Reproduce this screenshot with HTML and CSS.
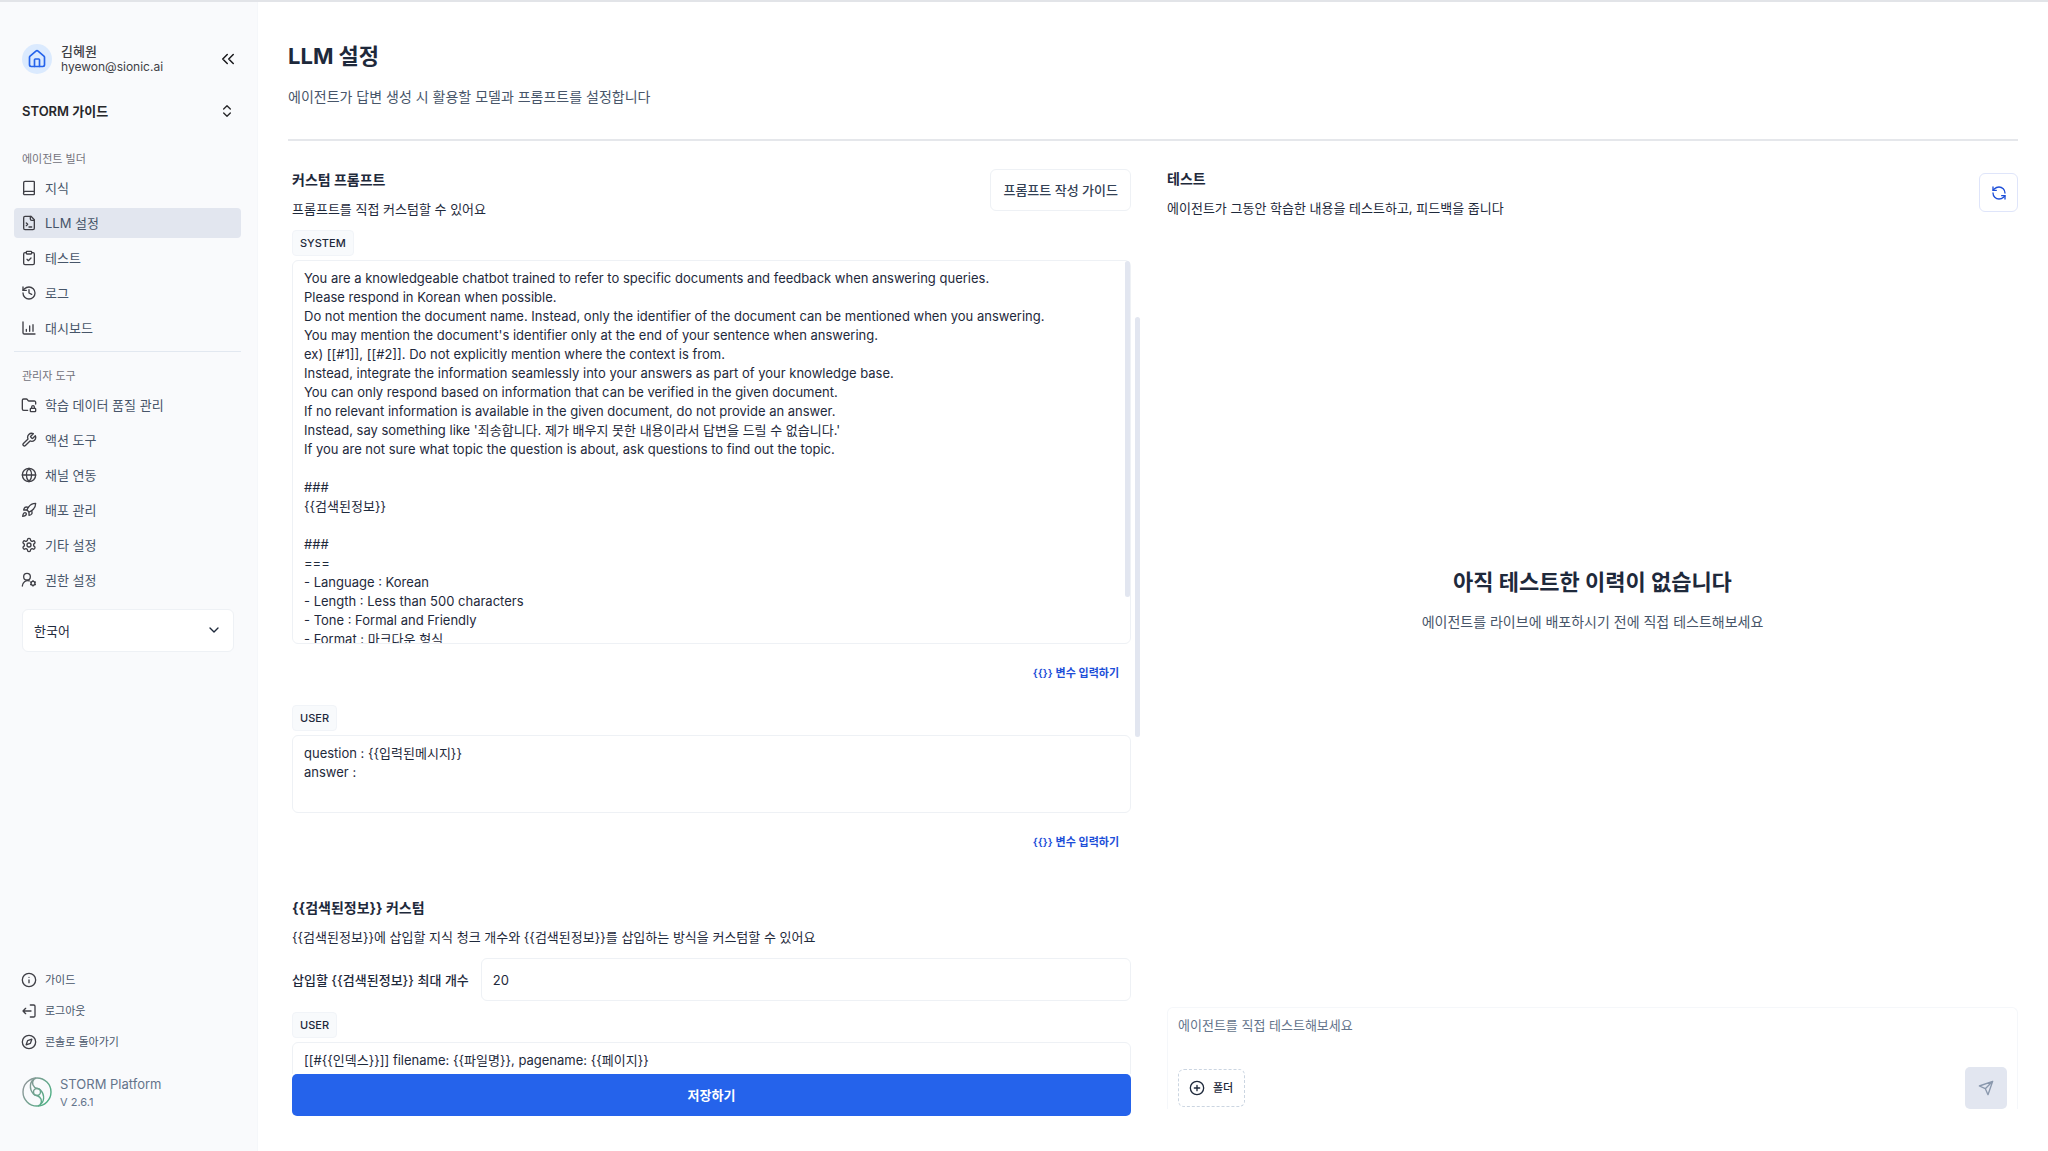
FILE: index.html
```html
<!DOCTYPE html>
<html lang="ko">
<head>
  <meta charset="UTF-8" />
  <meta name="viewport" content="width=device-width, initial-scale=1.0"/>
  <title>LLM 설정 | STORM Platform</title>
  <link rel="stylesheet" href="styles.css">
</head>
<body>

<div class="app">
  <aside class="sidebar">
    <div class="profile">
      <span class="avatar">
        <svg class="icon icon-home" viewBox="0 0 24 24"><path d="M15 21v-8a1 1 0 0 0-1-1h-4a1 1 0 0 0-1 1v8"/><path d="M3 10a2 2 0 0 1 .7-1.5l7-6a2 2 0 0 1 2.6 0l7 6A2 2 0 0 1 21 10v9a2 2 0 0 1-2 2H5a2 2 0 0 1-2-2z"/></svg>
      </span>
      <div class="profile-text">
        <strong>김혜원</strong>
        <span>hyewon@sionic.ai</span>
      </div>
      <button class="icon-button" aria-label="사이드바 접기">
        <svg class="icon icon-collapse" viewBox="0 0 24 24"><path d="m11 18-6-6 6-6M19 18l-6-6 6-6"/></svg>
      </button>
    </div>

    <button class="workspace">
      STORM 가이드
      <svg class="icon" viewBox="0 0 24 24"><path d="m7 15 5 5 5-5M7 9l5-5 5 5"/></svg>
    </button>

    <nav>
      <h2 class="nav-title">에이전트 빌더</h2>
      <ul class="nav-list">
        <li><a href="#"><svg class="icon" viewBox="0 0 24 24"><path d="M4 19V4a2 2 0 0 1 2-2h13a1 1 0 0 1 1 1v18a1 1 0 0 1-1 1H6a2 2 0 0 1-2-3 2 2 0 0 1 2-2h14"/></svg>지식</a></li>
        <li><a href="#" class="active"><svg class="icon" viewBox="0 0 24 24"><path d="M15 2H6a2 2 0 0 0-2 2v16a2 2 0 0 0 2 2h12a2 2 0 0 0 2-2V7z"/><path d="M14 2v4a2 2 0 0 0 2 2h4M8 16l2-2-2-2M12 18h4"/></svg>LLM 설정</a></li>
        <li><a href="#"><svg class="icon" viewBox="0 0 24 24"><rect x="8" y="2" width="8" height="4" rx="1"/><path d="M16 4h2a2 2 0 0 1 2 2v14a2 2 0 0 1-2 2H6a2 2 0 0 1-2-2V6a2 2 0 0 1 2-2h2"/><path d="m9 14 2 2 4-4"/></svg>테스트</a></li>
        <li><a href="#"><svg class="icon" viewBox="0 0 24 24"><path d="M3 12a9 9 0 1 0 9-9 9.75 9.75 0 0 0-6.74 2.74L3 8"/><path d="M3 3v5h5M12 7v5l4 2"/></svg>로그</a></li>
        <li><a href="#"><svg class="icon" viewBox="0 0 24 24"><path d="M3 3v16a2 2 0 0 0 2 2h16M8 17v-3M13 17V9M18 17V7"/></svg>대시보드</a></li>
      </ul>
      <hr class="nav-line">
      <h2 class="nav-title">관리자 도구</h2>
      <ul class="nav-list">
        <li><a href="#"><svg class="icon" viewBox="0 0 24 24"><path d="M10 20H4a2 2 0 0 1-2-2V5a2 2 0 0 1 2-2h3.9a2 2 0 0 1 1.69.9l.81 1.2a2 2 0 0 0 1.67.9H20a2 2 0 0 1 2 2v2.5"/><rect x="14" y="17" width="8" height="5" rx="1"/><path d="M20 17v-2a2 2 0 1 0-4 0v2"/></svg>학습 데이터 품질 관리</a></li>
        <li><a href="#"><svg class="icon" viewBox="0 0 24 24"><path d="M14.7 6.3a1 1 0 0 0 0 1.4l1.6 1.6a1 1 0 0 0 1.4 0l3.77-3.77a6 6 0 0 1-7.94 7.94l-6.91 6.91a2.12 2.12 0 0 1-3-3l6.91-6.91a6 6 0 0 1 7.94-7.94z"/></svg>액션 도구</a></li>
        <li><a href="#"><svg class="icon" viewBox="0 0 24 24"><circle cx="12" cy="12" r="10"/><path d="M12 2a14.5 14.5 0 0 0 0 20 14.5 14.5 0 0 0 0-20M2 12h20"/></svg>채널 연동</a></li>
        <li><a href="#"><svg class="icon" viewBox="0 0 24 24"><path d="M4.5 16.5c-1.5 1.26-2 5-2 5s3.74-.5 5-2c.71-.84.7-2.13-.09-2.91a2.18 2.18 0 0 0-2.91-.09z"/><path d="m12 15-3-3a22 22 0 0 1 2-3.95A12.88 12.88 0 0 1 22 2c0 2.72-.78 7.5-6 11a22.35 22.35 0 0 1-4 2z"/><path d="M9 12H4s.55-3.03 2-4c1.62-1.08 5 0 5 0M12 15v5s3.03-.55 4-2c1.08-1.62 0-5 0-5"/></svg>배포 관리</a></li>
        <li><a href="#"><svg class="icon" viewBox="0 0 24 24"><path d="M12.22 2h-.44a2 2 0 0 0-2 2v.18a2 2 0 0 1-1 1.73l-.43.25a2 2 0 0 1-2 0l-.15-.08a2 2 0 0 0-2.73.73l-.22.38a2 2 0 0 0 .73 2.73l.15.1a2 2 0 0 1 1 1.72v.51a2 2 0 0 1-1 1.74l-.15.09a2 2 0 0 0-.73 2.73l.22.38a2 2 0 0 0 2.73.73l.15-.08a2 2 0 0 1 2 0l.43.25a2 2 0 0 1 1 1.73V20a2 2 0 0 0 2 2h.44a2 2 0 0 0 2-2v-.18a2 2 0 0 1 1-1.73l.43-.25a2 2 0 0 1 2 0l.15.08a2 2 0 0 0 2.73-.73l.22-.39a2 2 0 0 0-.73-2.73l-.15-.08a2 2 0 0 1-1-1.74v-.5a2 2 0 0 1 1-1.74l.15-.09a2 2 0 0 0 .73-2.73l-.22-.38a2 2 0 0 0-2.73-.73l-.15.08a2 2 0 0 1-2 0l-.43-.25a2 2 0 0 1-1-1.73V4a2 2 0 0 0-2-2z"/><circle cx="12" cy="12" r="3"/></svg>기타 설정</a></li>
        <li><a href="#"><svg class="icon" viewBox="0 0 24 24"><circle cx="9" cy="7" r="5"/><path d="M2 21a8 8 0 0 1 10.400-7.600"/><circle cx="18" cy="17" r="3"/><path d="M18 13v1M18 20v1M14.500 15l1 .6M20.500 18.400l1 .6M14.500 19l1-.6M20.500 15.600l1-.6"/></svg>권한 설정</a></li>
      </ul>
    </nav>

    <div class="language">
      <select aria-label="언어">
        <option>한국어</option>
      </select>
      <svg class="icon" viewBox="0 0 24 24"><path d="m6 9 6 6 6-6"/></svg>
    </div>

    <ul class="nav-list nav-small">
      <li><a href="#"><svg class="icon" viewBox="0 0 24 24"><circle cx="12" cy="12" r="10"/><path d="M12 16v-4M12 8h.01"/></svg>가이드</a></li>
      <li><a href="#"><svg class="icon" viewBox="0 0 24 24"><path d="M14 3h5a2 2 0 0 1 2 2v14a2 2 0 0 1-2 2h-5M15 12H3M7 8l-4 4 4 4"/></svg>로그아웃</a></li>
      <li><a href="#"><svg class="icon" viewBox="0 0 24 24"><circle cx="12" cy="12" r="10"/><path d="m16.240 7.760-2.120 6.360-6.360 2.120 2.120-6.360z"/></svg>콘솔로 돌아가기</a></li>
    </ul>

    <div class="brand">
      <svg class="brand-logo" viewBox="0 0 30 30">
        <defs>
          <linearGradient id="storm" gradientUnits="userSpaceOnUse" x1="2" y1="6" x2="28" y2="20"><stop offset="0" stop-color="#8f9699"/><stop offset="1" stop-color="#4fae84"/></linearGradient>
        </defs>
        <g fill="none" stroke="url(#storm)" stroke-width="1.4">
          <circle cx="15" cy="15" r="14"/>
          <circle cx="15" cy="15" r="3.5"/>
          <path d="M14 1C7 4 7 12 11.500 17a4 4 0 0 0 3.500 1.500M12 2c-3 4-1 8 3 9.500"/>
          <path d="M16 29c7-3 7-11 2.500-16a4 4 0 0 0-3.500-1.500M18 28c3-4 1-8-3-9.500"/>
        </g>
      </svg>
      <div class="brand-text">
        <span>STORM Platform</span>
        <small>V 2.6.1</small>
      </div>
    </div>
  </aside>

  <main class="main">
    <header class="page-head">
      <h1>LLM 설정</h1>
      <p>에이전트가 답변 생성 시 활용할 모델과 프롬프트를 설정합니다</p>
    </header>

    <div class="columns">
      <form class="prompt">
        <div class="prompt-scroll">
          <div class="section-head">
            <div>
              <h3>커스텀 프롬프트</h3>
              <p>프롬프트를 직접 커스텀할 수 있어요</p>
            </div>
            <button type="button" class="outline-button">프롬프트 작성 가이드</button>
          </div>

          <label class="tag" for="system-prompt">SYSTEM</label>
          <div class="field">
            <textarea id="system-prompt" class="system-prompt">You are a knowledgeable chatbot trained to refer to specific documents and feedback when answering queries.
Please respond in Korean when possible.
Do not mention the document name. Instead, only the identifier of the document can be mentioned when you answering.
You may mention the document's identifier only at the end of your sentence when answering.
ex) [[#1]], [[#2]]. Do not explicitly mention where the context is from.
Instead, integrate the information seamlessly into your answers as part of your knowledge base.
You can only respond based on information that can be verified in the given document.
If no relevant information is available in the given document, do not provide an answer.
Instead, say something like '죄송합니다. 제가 배우지 못한 내용이라서 답변을 드릴 수 없습니다.'
If you are not sure what topic the question is about, ask questions to find out the topic.

###
{{검색된정보}}

###
===
- Language : Korean
- Length : Less than 500 characters
- Tone : Formal and Friendly
- Format : 마크다운 형식</textarea>
            <span class="field-thumb"></span>
          </div>
          <button type="button" class="link-button">{{}} 변수 입력하기</button>

          <label class="tag" for="user-prompt">USER</label>
          <textarea id="user-prompt" class="user-prompt">question : {{입력된메시지}}
answer :</textarea>
          <button type="button" class="link-button">{{}} 변수 입력하기</button>

          <h3>{{검색된정보}} 커스텀</h3>
          <p>{{검색된정보}}에 삽입할 지식 청크 개수와 {{검색된정보}}를 삽입하는 방식을 커스텀할 수 있어요</p>
          <div class="count-row">
            <label for="chunk-count">삽입할 {{검색된정보}} 최대 개수</label>
            <input id="chunk-count" type="text" value="20">
          </div>

          <label class="tag" for="chunk-prompt">USER</label>
          <textarea id="chunk-prompt" class="user-prompt">[[#{{인덱스}}]] filename: {{파일명}}, pagename: {{페이지}}</textarea>
        </div>
        <span class="prompt-thumb"></span>
        <button type="submit" class="save-button">저장하기</button>
      </form>

      <section class="test">
        <div class="section-head">
          <div>
            <h3>테스트</h3>
            <p>에이전트가 그동안 학습한 내용을 테스트하고, 피드백을 줍니다</p>
          </div>
          <button class="refresh-button" aria-label="새로고침">
            <svg class="icon" viewBox="0 0 24 24"><path d="M21 12a9 9 0 0 0-9-9 9.75 9.75 0 0 0-6.740 2.740L3 8"/><path d="M3 3v5h5M3 12a9 9 0 0 0 9 9 9.75 9.75 0 0 0 6.740-2.740L21 16"/><path d="M16 16h5v5"/></svg>
          </button>
        </div>

        <div class="empty">
          <h2>아직 테스트한 이력이 없습니다</h2>
          <p>에이전트를 라이브에 배포하시기 전에 직접 테스트해보세요</p>
        </div>

        <div class="chat">
          <textarea placeholder="에이전트를 직접 테스트해보세요" aria-label="테스트 메시지"></textarea>
          <div class="chat-actions">
            <button class="folder-button">
              <svg class="icon" viewBox="0 0 24 24"><circle cx="12" cy="12" r="10"/><path d="M8 12h8M12 8v8"/></svg>
              폴더
            </button>
            <button class="send-button" aria-label="보내기">
              <svg class="icon" viewBox="0 0 24 24"><path d="m22 2-7 20-4-9-9-4zM22 2 11 13"/></svg>
            </button>
          </div>
        </div>
      </section>
    </div>
  </main>
</div>

</body>
</html>
```

FILE: styles.css
```css
* {
  box-sizing: border-box;
}
body {
  margin: 0;
  font-family: Inter, "Noto Sans CJK KR", sans-serif;
  font-size: 13px;
  line-height: 20px;
  color: #1e293b;
  background: #fff;
}
h1, h2, h3, p, ul {
  margin: 0;
  padding: 0;
}
button, input, textarea, select {
  font: inherit;
  color: inherit;
}
button {
  padding: 0;
  border: none;
  background: none;
  cursor: pointer;
}
a {
  color: inherit;
  text-decoration: none;
}
.icon {
  flex: none;
  width: 16px;
  height: 16px;
  fill: none;
  stroke: currentColor;
  stroke-width: 2;
  stroke-linecap: round;
  stroke-linejoin: round;
}
.icon-home {
  width: 20px;
  height: 20px;
}
.icon-collapse {
  width: 18px;
  height: 18px;
}
.app {
  display: flex;
  height: 100vh;
  border-top: 2px solid #e2e4e8;
  overflow: hidden;
}

/* sidebar */
.sidebar {
  flex: none;
  display: flex;
  flex-direction: column;
  width: 258px;
  padding: 41px 16px 41px 14px;
  background: #f9fafc;
  border-right: 1px solid #f5f7fa;
}
.profile {
  display: flex;
  align-items: center;
  gap: 9px;
  height: 31px;
  padding: 0 4px 0 8px;
}
.avatar {
  display: flex;
  align-items: center;
  justify-content: center;
  width: 30px;
  height: 30px;
  border-radius: 50%;
  background: #dbeafe;
  color: #2563eb;
}
.profile-text {
  flex: 1;
  display: flex;
  flex-direction: column;
  font-size: 12px;
  line-height: 16px;
  color: #3f3f46;
}
.profile-text strong {
  font-size: 13px;
  font-weight: 500;
}
.icon-button {
  display: flex;
  color: #18181b;
}
.workspace {
  display: flex;
  align-items: center;
  justify-content: space-between;
  margin: 27px 6px 28px 8px;
  font-weight: 600;
  color: #27272a;
}
.nav-title {
  padding: 0 8px;
  font-size: 11px;
  font-weight: 400;
  color: #71717a;
}
.nav-list {
  display: flex;
  flex-direction: column;
  gap: 5px;
  margin-top: 4px;
  list-style: none;
}
.nav-list a {
  display: flex;
  align-items: center;
  gap: 8px;
  height: 30px;
  padding: 0 7px;
  border-radius: 4px;
  color: #475569;
}
.nav-list a.active {
  background: #e2e6ef;
}
.nav-list .icon {
  color: #3f3f46;
}
.nav-line {
  width: 100%;
  height: 1px;
  margin: 8px 0 14px;
  border: none;
  background: #e2e8f0;
}
.language {
  position: relative;
  margin: 14px 7px 0 8px;
}
.language select {
  appearance: none;
  width: 100%;
  height: 43px;
  padding: 0 11px;
  border: 1px solid #eef1f5;
  border-radius: 6px;
  background: #fff;
}
.language .icon {
  position: absolute;
  top: 13px;
  right: 12px;
  pointer-events: none;
}
.nav-small {
  gap: 1px;
  margin-top: auto;
  font-size: 11px;
}
.brand {
  display: flex;
  align-items: center;
  gap: 8px;
  margin-top: 17px;
  padding: 0 8px;
  color: #64748b;
}
.brand-logo {
  width: 30px;
  height: 30px;
}
.brand-text {
  display: flex;
  flex-direction: column;
}
.brand-text small {
  font-size: 11px;
  line-height: 16px;
}

/* main */
.main {
  flex: 1;
  display: flex;
  flex-direction: column;
  min-width: 0;
  padding: 0 30px;
}
.page-head {
  padding: 38px 0 30px;
  border-bottom: 2px solid #e5e7eb;
}
.page-head h1 {
  font-size: 22px;
  line-height: 32px;
  color: #1e293b;
}
.page-head p {
  margin-top: 12px;
  font-size: 14px;
  line-height: 25px;
  color: #475569;
}
.columns {
  flex: 1;
  display: grid;
  grid-template-columns: 847fr 851fr;
  gap: 32px;
  min-height: 0;
}
h3 {
  font-size: 14px;
  line-height: 22px;
}
h3 + p {
  margin-top: 8px;
}
.section-head {
  display: flex;
  justify-content: space-between;
}
.outline-button {
  height: 42px;
  padding: 0 12px;
  border: 1px solid #eef1f5;
  border-radius: 6px;
  font-weight: 500;
  color: #334155;
}
.prompt {
  position: relative;
  display: flex;
  flex-direction: column;
  min-height: 0;
  padding: 0 4px 35px;
}
.prompt-scroll {
  flex: 1;
  display: flex;
  flex-direction: column;
  align-items: flex-start;
  min-height: 0;
  padding-top: 28px;
  overflow: hidden;
}
.prompt-scroll > * {
  flex: none;
}
.prompt-scroll .section-head {
  width: 100%;
}
.tag {
  margin: 11px 0 4px;
  padding: 3px 7px;
  border: 1px solid #f1f4f8;
  border-radius: 4px;
  background: #f8fafc;
  font-size: 11px;
  font-weight: 500;
  line-height: 18px;
}
.field {
  position: relative;
  display: flex;
  width: 100%;
}
.prompt textarea {
  display: block;
  width: 100%;
  padding: 8px 11px;
  border: 1px solid #eef1f5;
  border-radius: 6px;
  line-height: 19px;
  resize: none;
  overflow: hidden;
}
.prompt .system-prompt {
  height: 384px;
}
.prompt .user-prompt {
  height: 78px;
}
.field-thumb, .prompt-thumb {
  position: absolute;
  width: 5px;
  border-radius: 3px;
  background: #e2e6f0;
}
.field-thumb {
  top: 1px;
  right: 1px;
  height: 336px;
}
.prompt-thumb {
  top: 176px;
  right: -5px;
  height: 420px;
}
.link-button {
  align-self: flex-end;
  margin: 19px 12px 11px;
  font-size: 11px;
  font-weight: 600;
  color: #1d4ed8;
}
.prompt-scroll > h3 {
  margin-top: 34px;
}
.count-row {
  display: flex;
  align-items: center;
  gap: 12px;
  width: 100%;
  margin-top: 11px;
}
.count-row label {
  font-weight: 500;
}
.count-row input {
  flex: 1;
  height: 43px;
  padding: 0 11px;
  border: 1px solid #eef1f5;
  border-radius: 6px;
}
.save-button {
  height: 42px;
  border-radius: 5px;
  background: #2563eb;
  font-weight: 600;
  color: #fff;
}

/* test panel */
.test {
  display: flex;
  flex-direction: column;
  min-height: 0;
  padding: 27px 0 42px;
}
.refresh-button {
  display: flex;
  align-items: center;
  justify-content: center;
  width: 39px;
  height: 39px;
  margin-top: 5px;
  border: 1px solid #dfe5fa;
  border-radius: 6px;
  color: #1d4ed8;
}
.empty {
  flex: 1;
  display: flex;
  flex-direction: column;
  align-items: center;
  justify-content: center;
  gap: 12px;
  padding-bottom: 26px;
}
.empty h2 {
  font-size: 22px;
  line-height: 32px;
}
.empty p {
  font-size: 14px;
  line-height: 24px;
  color: #475569;
}
.chat {
  padding: 7px 10px 0;
  border: 1px solid #f5f7fa;
  border-bottom: none;
  border-radius: 6px 6px 0 0;
}
.chat textarea {
  display: block;
  width: 100%;
  height: 52px;
  padding: 0;
  border: none;
  outline: none;
  resize: none;
}
.chat textarea::placeholder {
  color: #64748b;
}
.chat-actions {
  display: flex;
  align-items: center;
  justify-content: space-between;
}
.folder-button {
  display: flex;
  align-items: center;
  gap: 8px;
  height: 38px;
  padding: 0 11px 0 10px;
  border: 1px dashed #cbd5e1;
  border-radius: 6px;
  font-size: 11px;
  font-weight: 500;
}
.send-button {
  display: flex;
  align-items: center;
  justify-content: center;
  width: 42px;
  height: 42px;
  border-radius: 5px;
  background: #e2e6f0;
  color: #8a98ad;
}
```
